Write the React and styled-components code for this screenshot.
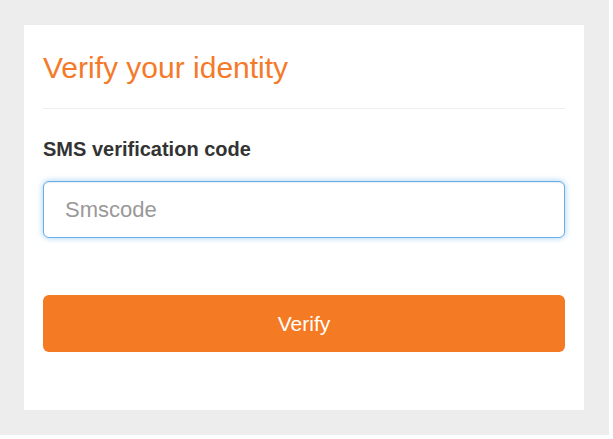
import React from 'react'
import styled, { createGlobalStyle } from 'styled-components'

const GlobalStyle = createGlobalStyle`
  html, body {
    margin: 0;
    padding: 0;
    background: #fff;
  }
  body {
    font-family: 'Liberation Sans', Arial, sans-serif;
  }
`

const Page = styled.div`
  width: 609px;
  height: 435px;
  background: #ededed;
  padding: 25px 0 0 24px;
  box-sizing: border-box;
`

const Card = styled.div`
  width: 560px;
  height: 385px;
  box-sizing: border-box;
  background: #fff;
  padding: 26px 19px 0;
  display: flex;
  flex-direction: column;
`

const Title = styled.h3`
  margin: 0;
  font-size: 30px;
  line-height: 33px;
  font-weight: 400;
  color: #f47a2a;
  padding-bottom: 24px;
  border-bottom: 1px solid #eee;
`

const Label = styled.label`
  display: block;
  margin-top: 29px;
  font-size: 20px;
  line-height: 22px;
  font-weight: 700;
  color: #333;
`

const Input = styled.input`
  margin-top: 21px;
  height: 57px;
  box-sizing: border-box;
  padding: 0 21px;
  border: 1px solid #66afe9;
  border-radius: 6px;
  box-shadow: inset 0 1px 1px rgba(0, 0, 0, 0.075), 0 0 6px rgba(102, 175, 233, 0.6);
  font-family: inherit;
  font-size: 22px;
  color: #555;
  outline: none;

  &::placeholder {
    color: #999;
  }
`

const Button = styled.button`
  margin-top: 57px;
  height: 57px;
  border: none;
  border-radius: 6px;
  background: #f47a23;
  color: #fff;
  font-family: inherit;
  font-size: 21px;
  cursor: pointer;
`

export default function App() {
  return (
    <>
      <GlobalStyle />
      <Page>
        <Card>
          <Title>Verify your identity</Title>
          <Label htmlFor="smscode">SMS verification code</Label>
          <Input id="smscode" type="text" placeholder="Smscode" />
          <Button type="button">Verify</Button>
        </Card>
      </Page>
    </>
  )
}
